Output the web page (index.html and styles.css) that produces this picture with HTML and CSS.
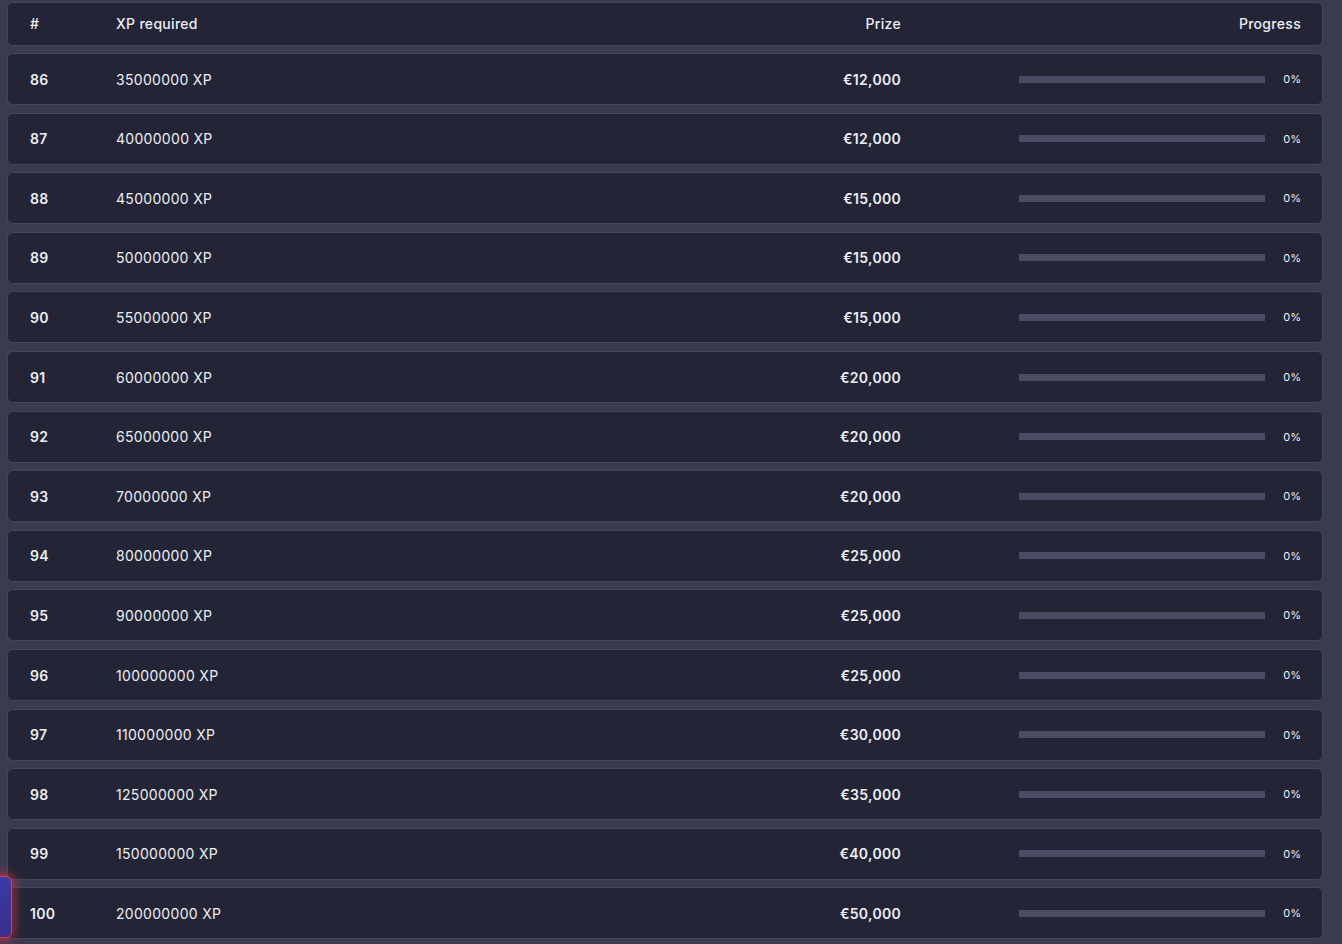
FILE: index.html
```html
<!DOCTYPE html>
<html>
<head>
<meta charset="utf-8">
<link rel="stylesheet" href="styles.css">
</head>
<body>
<div class="table">
  <div class="row head">
    <div class="c-num">#</div>
    <div class="c-xp">XP required</div>
    <div class="c-prize">Prize</div>
    <div class="c-prog">Progress</div>
  </div>
  <div class="row"><div class="c-num">86</div><div class="c-xp">35000000 XP</div><div class="c-prize">€12,000</div><div class="c-prog"><span class="bar"></span><span class="pct">0%</span></div></div>
  <div class="row"><div class="c-num">87</div><div class="c-xp">40000000 XP</div><div class="c-prize">€12,000</div><div class="c-prog"><span class="bar"></span><span class="pct">0%</span></div></div>
  <div class="row"><div class="c-num">88</div><div class="c-xp">45000000 XP</div><div class="c-prize">€15,000</div><div class="c-prog"><span class="bar"></span><span class="pct">0%</span></div></div>
  <div class="row"><div class="c-num">89</div><div class="c-xp">50000000 XP</div><div class="c-prize">€15,000</div><div class="c-prog"><span class="bar"></span><span class="pct">0%</span></div></div>
  <div class="row"><div class="c-num">90</div><div class="c-xp">55000000 XP</div><div class="c-prize">€15,000</div><div class="c-prog"><span class="bar"></span><span class="pct">0%</span></div></div>
  <div class="row"><div class="c-num">91</div><div class="c-xp">60000000 XP</div><div class="c-prize">€20,000</div><div class="c-prog"><span class="bar"></span><span class="pct">0%</span></div></div>
  <div class="row"><div class="c-num">92</div><div class="c-xp">65000000 XP</div><div class="c-prize">€20,000</div><div class="c-prog"><span class="bar"></span><span class="pct">0%</span></div></div>
  <div class="row"><div class="c-num">93</div><div class="c-xp">70000000 XP</div><div class="c-prize">€20,000</div><div class="c-prog"><span class="bar"></span><span class="pct">0%</span></div></div>
  <div class="row"><div class="c-num">94</div><div class="c-xp">80000000 XP</div><div class="c-prize">€25,000</div><div class="c-prog"><span class="bar"></span><span class="pct">0%</span></div></div>
  <div class="row"><div class="c-num">95</div><div class="c-xp">90000000 XP</div><div class="c-prize">€25,000</div><div class="c-prog"><span class="bar"></span><span class="pct">0%</span></div></div>
  <div class="row"><div class="c-num">96</div><div class="c-xp">100000000 XP</div><div class="c-prize">€25,000</div><div class="c-prog"><span class="bar"></span><span class="pct">0%</span></div></div>
  <div class="row"><div class="c-num">97</div><div class="c-xp">110000000 XP</div><div class="c-prize">€30,000</div><div class="c-prog"><span class="bar"></span><span class="pct">0%</span></div></div>
  <div class="row"><div class="c-num">98</div><div class="c-xp">125000000 XP</div><div class="c-prize">€35,000</div><div class="c-prog"><span class="bar"></span><span class="pct">0%</span></div></div>
  <div class="row"><div class="c-num">99</div><div class="c-xp">150000000 XP</div><div class="c-prize">€40,000</div><div class="c-prog"><span class="bar"></span><span class="pct">0%</span></div></div>
  <div class="row"><div class="c-num">100</div><div class="c-xp">200000000 XP</div><div class="c-prize">€50,000</div><div class="c-prog"><span class="bar"></span><span class="pct">0%</span></div></div>
</div>
<div class="chat-tab"></div>
</body>
</html>
```
FILE: styles.css
```css
html, body {
  margin: 0;
  padding: 0;
  background: #393c51;
  height: 944px;
  overflow: hidden;
}
body {
  font-family: Inter, "Noto Sans", sans-serif;
  color: #eceef4;
}
.table {
  display: flex;
  flex-direction: column;
  gap: 7.6px;
  padding: 1.5px 19px 0 7px;
}
.row {
  display: grid;
  grid-template-columns: 86px 1fr 200px 400px;
  align-items: center;
  height: 52px;
  box-sizing: border-box;
  padding: 0 21px 0 22px;
  background: #232536;
  border: 1px solid #43465c;
  border-radius: 6px;
  font-size: 14px;
  letter-spacing: 0.3px;
}
.row.head {
  height: 44px;
  font-size: 14px;
}
.c-num { font-weight: 600; }
.c-xp { font-weight: 400; }
.head .c-num, .head .c-xp, .head .c-prize, .head .c-prog { font-weight: 500; }
.c-prize { text-align: right; font-weight: 600; }
.c-prog {
  display: flex;
  justify-content: flex-end;
  align-items: center;
  text-align: right;
}
.bar {
  display: block;
  width: 246px;
  height: 7px;
  background: #494c63;
}
.pct {
  display: block;
  width: 36px;
  text-align: right;
  font-size: 11px;
  letter-spacing: 0;
}
.chat-tab {
  position: absolute;
  left: -10px;
  top: 876px;
  width: 20px;
  height: 60px;
  border-radius: 6px;
  background: linear-gradient(180deg, #3b3aa8, #3a2e8a);
  border: 1px solid #e8384e;
  box-shadow: 0 0 10px 3px rgba(230, 45, 70, 0.6);
}
```
